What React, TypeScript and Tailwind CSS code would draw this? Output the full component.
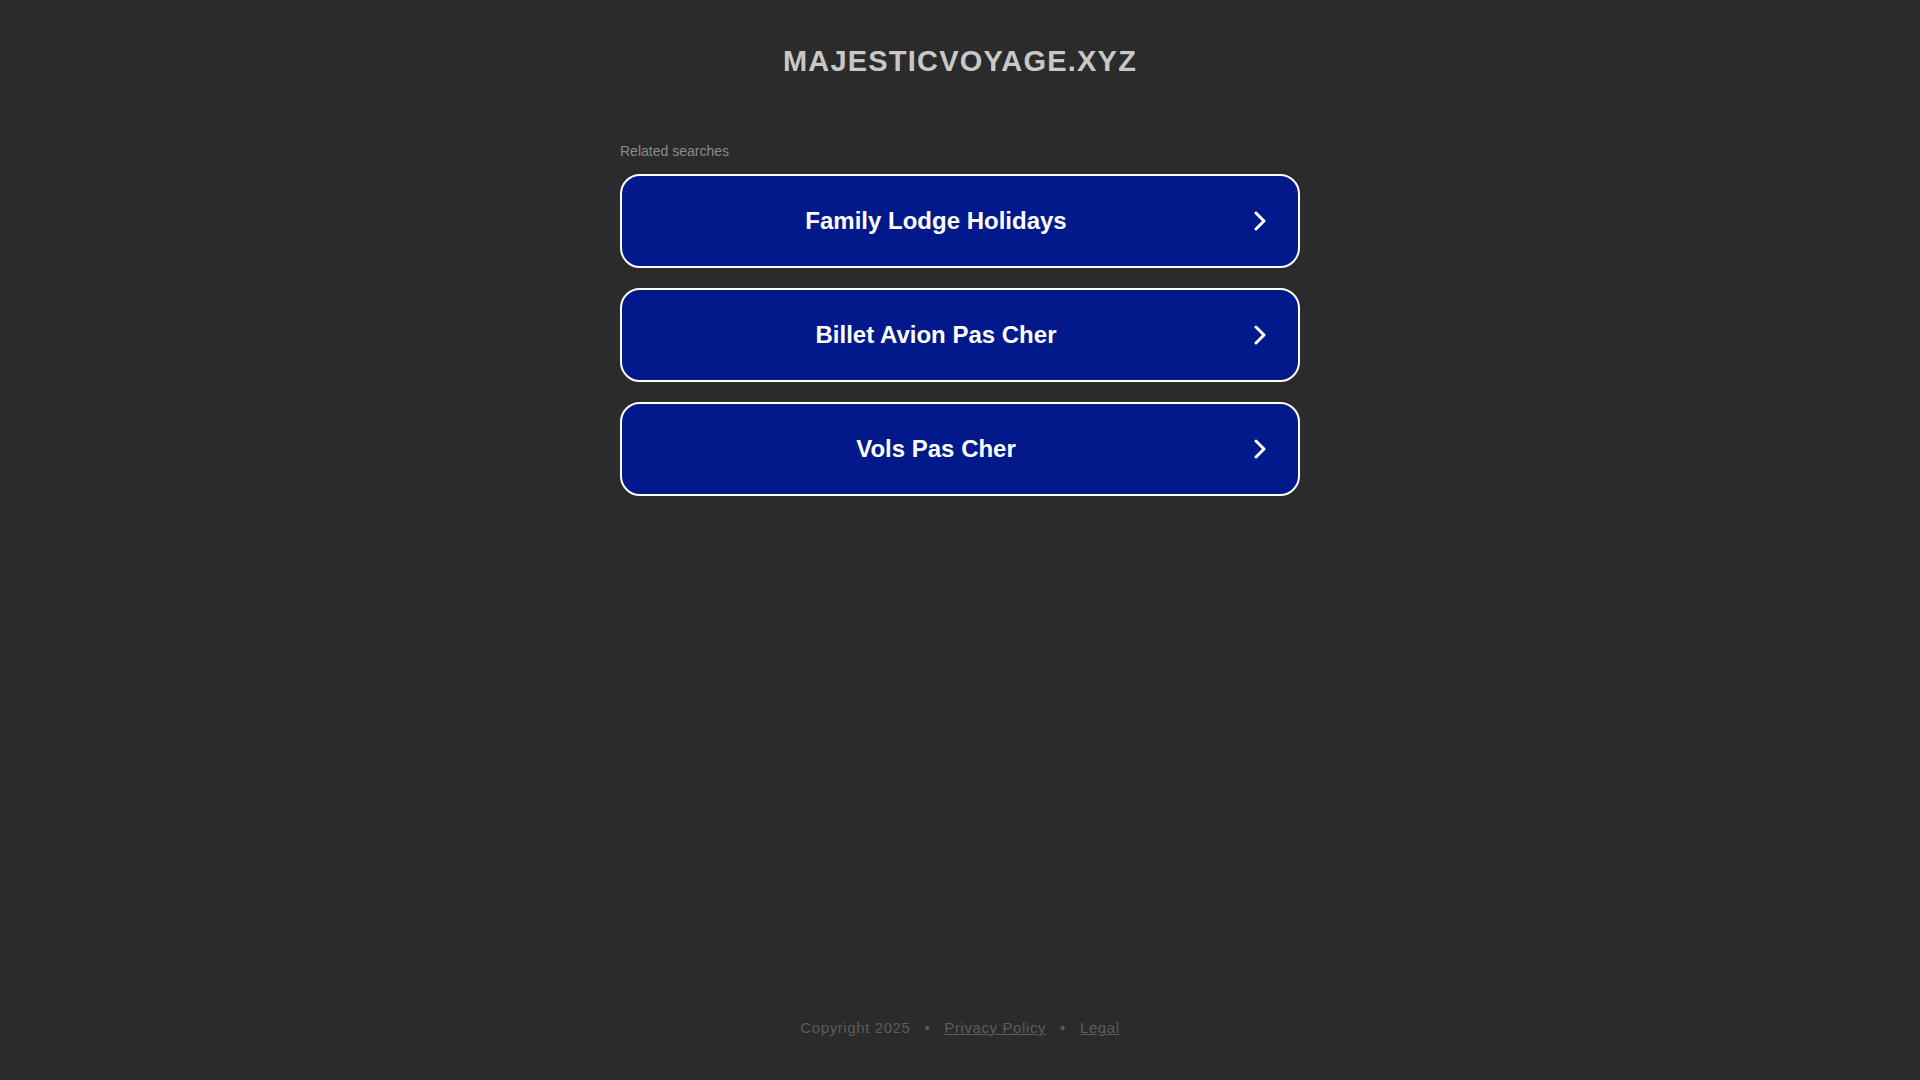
const searches = ["Family Lodge Holidays", "Billet Avion Pas Cher", "Vols Pas Cher"];

function Chevron() {
  return (
    <svg width="12" height="20" viewBox="0 0 12 20" fill="none" className="block">
      <polyline
        points="2,2 10,10 2,18"
        stroke="#ffffff"
        strokeWidth="3"
        strokeLinecap="round"
        strokeLinejoin="round"
      />
    </svg>
  );
}

export default function App() {
  return (
    <div
      className="flex min-h-screen flex-col bg-[#2b2b2b]"
      style={{ fontFamily: '"Liberation Sans", Arial, sans-serif' }}
    >
      <header className="pt-[43px] text-center">
        <h1 className="text-[29px] font-bold leading-[36px] tracking-[1.2px] text-[#c8c8c8]">
          MAJESTICVOYAGE.XYZ
        </h1>
      </header>

      <main className="mx-auto mt-[62px] w-[680px]">
        <p className="mb-[13px] text-[14px] leading-[20px] text-[#8a8a8a]">Related searches</p>
        <div className="flex flex-col gap-[20px]">
          {searches.map((s) => (
            <a
              key={s}
              href="#"
              className="flex h-[94px] items-center rounded-[20px] border-2 border-white bg-[#02198b] px-[14px]"
            >
              <span className="flex-1 text-center text-[24px] font-bold text-white">{s}</span>
              <span className="flex w-[48px] justify-center">
                <Chevron />
              </span>
            </a>
          ))}
        </div>
      </main>

      <footer className="mt-auto pb-[42px] text-center text-[15px] leading-[20px] tracking-[0.6px] text-[#5c5c5c]">
        <span>Copyright 2025</span>
        <span className="mx-[14px]">•</span>
        <a href="#" className="underline">
          Privacy Policy
        </a>
        <span className="mx-[14px]">•</span>
        <a href="#" className="underline">
          Legal
        </a>
      </footer>
    </div>
  );
}
